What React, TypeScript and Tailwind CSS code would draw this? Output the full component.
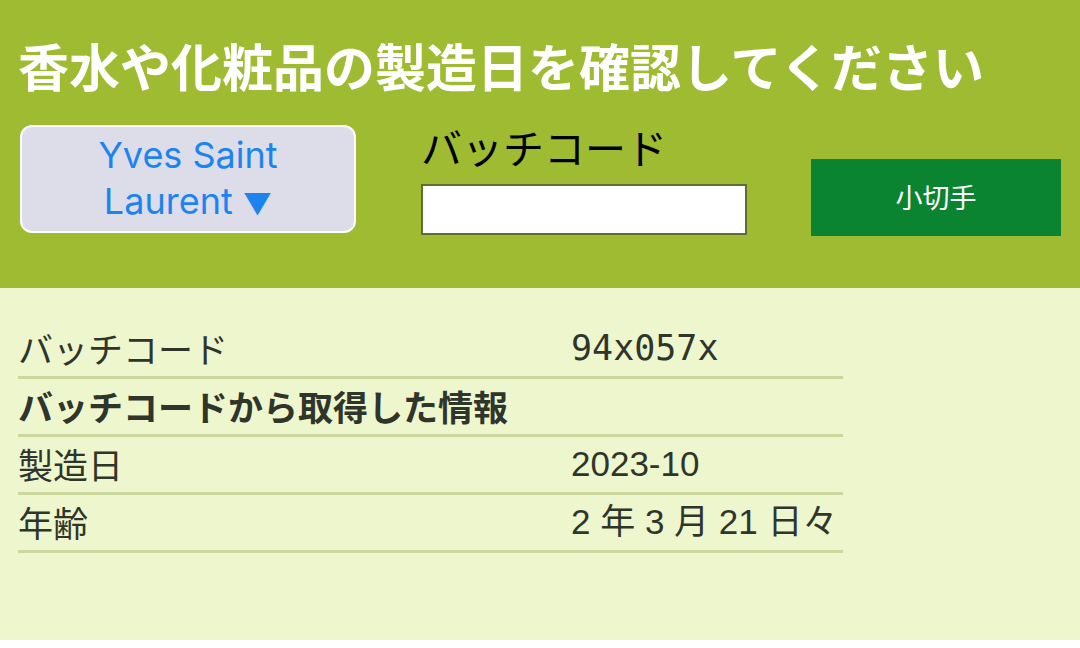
import { useState } from 'react'

const jp = "font-['Noto_Sans_CJK_JP',sans-serif]"

const rows = [
  { label: 'バッチコード', value: '94x057x', mono: true },
  { label: 'バッチコードから取得した情報', value: '', bold: true },
  { label: '製造日', value: '2023-10' },
  { label: '年齢', value: '2 年 3 月 21 日々' },
]

export default function App() {
  const [code, setCode] = useState('')

  return (
    <div className="min-h-[648px] bg-white">
      <header className="h-[288px] bg-[#9ebb31] px-[18px] pt-[39px]">
        <h1 className={`${jp} text-[51px] leading-[52px] font-bold text-white`}>
          香水や化粧品の製造日を確認してください
        </h1>
        <div className="mt-[34px] flex items-end">
          <button className="ml-[2px] flex h-[108px] w-[336px] flex-col items-center justify-center rounded-[12px] border-2 border-white bg-[#dcdde9] font-['Inter',sans-serif] text-[36px] leading-[46px] text-[#1c84ee]">
            <span>Yves Saint</span>
            <span>
              Laurent <span className="text-[29px]">▼</span>
            </span>
          </button>
          <div className="ml-[65px] flex w-[326px] flex-col">
            <label className={`${jp} text-[41px] leading-[40px] text-black`}>バッチコード</label>
            <input
              value={code}
              onChange={(e) => setCode(e.target.value)}
              className="mt-[18px] mb-[-2px] h-[51px] w-full border-2 border-[#5f6e35] bg-white px-2 text-[24px] outline-none"
            />
          </div>
          <button className={`${jp} ml-[64px] mb-[-3px] h-[77px] w-[250px] bg-[#0b8432] text-[27px] text-white`}>
            小切手
          </button>
        </div>
      </header>
      <section className="h-[352px] bg-[#edf6cc] px-[18px] pt-[33px]">
        <div className="w-[825px]">
          {rows.map((r) => (
            <div
              key={r.label}
              className="grid h-[58px] grid-cols-[553px_1fr] items-center border-b-[3px] border-[#cbd89d] text-[35px] text-[#30352b]"
            >
              <span className={`${jp} ${r.bold ? 'font-bold' : ''} whitespace-nowrap`}>{r.label}</span>
              <span
                className={
                  r.mono
                    ? "font-['DejaVu_Sans_Mono',monospace] text-[35px]"
                    : "font-['Liberation_Sans','Noto_Sans_CJK_JP',sans-serif]"
                }
              >
                {r.value}
              </span>
            </div>
          ))}
        </div>
      </section>
    </div>
  )
}
